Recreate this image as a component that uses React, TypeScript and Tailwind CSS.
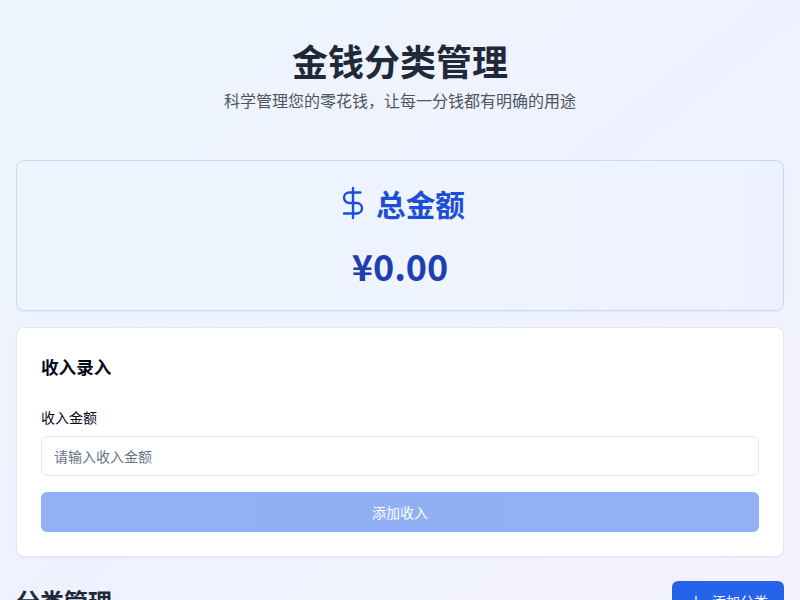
import { DollarSign, Plus } from "lucide-react";

export default function App() {
  return (
    <div className="min-h-screen bg-gradient-to-br from-[#eff6ff] via-[#eef2ff] to-[#f5f3ff] p-4 font-['Noto_Sans_CJK_SC','Noto_Sans',sans-serif]">
      <div className="py-6 mb-6 text-center">
        <h1 className="text-4xl font-bold text-[#1f2937] leading-[40px]">金钱分类管理</h1>
        <p className="text-base text-[#4b5563] leading-6 mt-2">科学管理您的零花钱，让每一分钱都有明确的用途</p>
      </div>
      <div className="flex flex-col gap-4">
        <div className="rounded-lg border border-[#bfdbfe] bg-gradient-to-r from-[#eff6ff] to-[#eef2ff] shadow-[0_1px_2px_rgba(0,0,0,0.05)] p-6 flex flex-col items-center">
          <div className="flex items-center gap-[5px] text-[#1d4ed8] h-[38px]">
            <DollarSign className="w-9 h-9 mb-[2px]" strokeWidth={1.6} />
            <span className="text-[29.6px] font-bold">总金额</span>
          </div>
          <div className="mt-[21px] text-4xl font-bold text-[#1e40af] leading-[42px]">¥0.00</div>
        </div>
        <div className="rounded-lg border border-[#e5e7eb] bg-white shadow-[0_1px_2px_rgba(0,0,0,0.05)] p-6">
          <h3 className="text-[17.6px] font-semibold text-[#020817] leading-[30px] mb-[25px]">收入录入</h3>
          <label className="block text-sm font-normal text-[#020817] leading-5 mb-[9px]">收入金额</label>
          <input
            placeholder="请输入收入金额"
            className="block w-full h-10 rounded-md border border-[#e2e8f0] bg-white px-3 text-sm placeholder:text-[#64748b]"
          />
          <button className="mt-4 w-full h-10 rounded-md bg-[#2563eb] opacity-50 text-white text-sm font-normal">添加收入</button>
        </div>
        <div className="flex items-center justify-between mt-2">
          <h2 className="text-2xl font-bold text-[#1f2937]">分类管理</h2>
          <button className="h-10 px-4 rounded-md bg-[#2563eb] text-white text-sm font-normal flex items-center gap-2">
            <Plus className="w-4 h-4" />
            添加分类
          </button>
        </div>
      </div>
    </div>
  );
}
